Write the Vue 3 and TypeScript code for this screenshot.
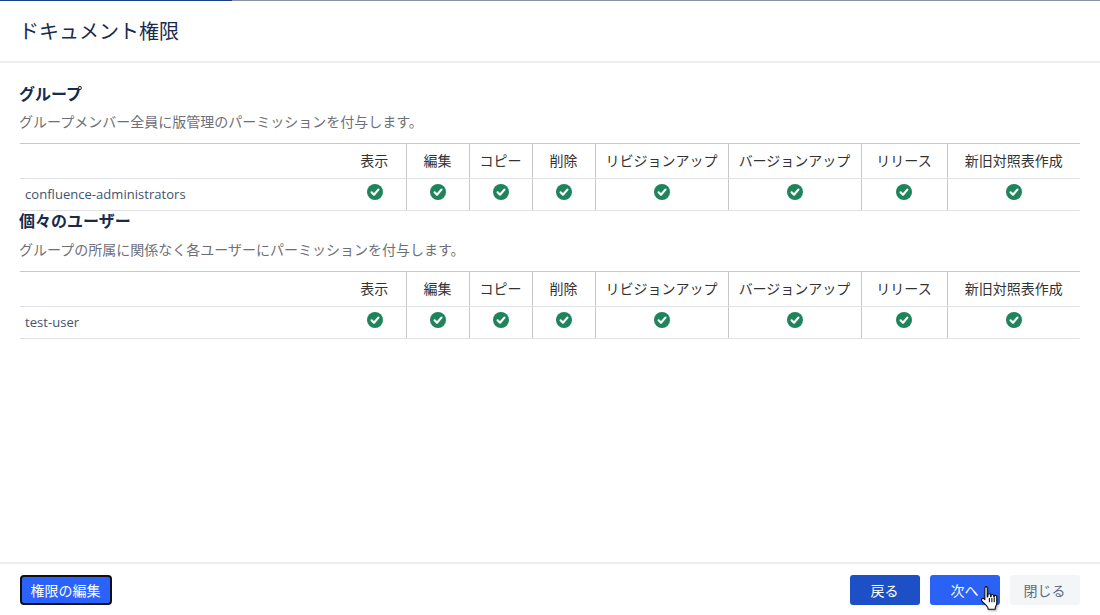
<script setup lang="ts">
const perms: string[] = ['表示', '編集', 'コピー', '削除', 'リビジョンアップ', 'バージョンアップ', 'リリース', '新旧対照表作成']
const widths: number[] = [63, 63, 63, 63, 133, 133, 86, 133]
const sections = [
  { title: 'グループ', desc: 'グループメンバー全員に版管理のパーミッションを付与します。', name: 'confluence-administrators' },
  { title: '個々のユーザー', desc: 'グループの所属に関係なく各ユーザーにパーミッションを付与します。', name: 'test-user' },
]
</script>

<template>
  <div class="dialog">
    <div class="progress"><div class="progress-fill"></div></div>
    <header class="head">
      <h1>ドキュメント権限</h1>
    </header>
    <main class="body">
      <section v-for="s in sections" :key="s.name" class="section">
        <h2>{{ s.title }}</h2>
        <p>{{ s.desc }}</p>
        <table>
          <colgroup>
            <col />
            <col v-for="(w, i) in widths" :key="i" :style="{ width: w + 'px' }" />
          </colgroup>
          <thead>
            <tr>
              <th></th>
              <th v-for="p in perms" :key="p">{{ p }}</th>
            </tr>
          </thead>
          <tbody>
            <tr>
              <td class="name">{{ s.name }}</td>
              <td v-for="p in perms" :key="p" class="check">
                <svg width="16" height="16" viewBox="0 0 16 16">
                  <circle cx="8" cy="8" r="8" fill="#1f845a" />
                  <path d="M4.600 8.300 7 10.700 11.400 5.600" fill="none" stroke="#fff" stroke-width="2.200" stroke-linecap="round" stroke-linejoin="round" />
                </svg>
              </td>
            </tr>
          </tbody>
        </table>
      </section>
    </main>
    <footer class="foot">
      <button class="btn edit">権限の編集</button>
      <div class="actions">
        <button class="btn back">戻る</button>
        <button class="btn next">次へ</button>
        <button class="btn close">閉じる</button>
      </div>
    </footer>
    <svg class="cursor" width="22" height="27" viewBox="0 0 20 25">
      <path d="M5 1.500c.9 0 1.500.7 1.500 1.600V11l.6-.1V9.300c0-.7.6-1.200 1.300-1.200s1.200.5 1.200 1.200v1.500l.5.1V9.900c0-.7.5-1.100 1.200-1.100s1.200.5 1.200 1.200v1.200l.5.2v-.7c0-.7.5-1.100 1.100-1.100.7 0 1.200.5 1.200 1.200v5.600c0 1.300-.3 2.300-.9 3.300-.3.6-.5 1.200-.5 2v.8H7.300v-.8c0-.8-.6-1.700-1.500-2.600L1.800 15.100c-.7-.7-.8-1.600-.2-2.200.6-.6 1.500-.6 2.200 0l-.1.100.6.500V3.100c0-.9.700-1.600 1.700-1.600Z" fill="#fff" stroke="#111" stroke-width="1" stroke-linejoin="round" />
      <path d="M8.500 12v4M10.800 12v4M13 12v4" stroke="#111" stroke-width="1" fill="none" />
    </svg>
  </div>
</template>

<style scoped>
.dialog {
  position: relative;
  width: 1100px;
  height: 615px;
  background: #fff;
  display: flex;
  flex-direction: column;
  overflow: hidden;
  font-family: "Open Sans", "Noto Sans CJK JP", sans-serif;
  color: #172b4d;
}
.progress {
  height: 1px;
  background: #8993a4;
  flex: none;
}
.progress-fill {
  width: 232px;
  height: 1px;
  background: #1a3e8c;
}
.head {
  height: 60px;
  flex: none;
  border-bottom: 2px solid #ebecf0;
  padding: 0 19px;
  display: flex;
  align-items: center;
}
h1 {
  margin: 0;
  font-size: 20px;
  font-weight: 400;
  line-height: 60px;
  color: #172b4d;
  font-family: "Noto Sans CJK JP", sans-serif;
}
.body {
  flex: 1;
  padding: 18px 20px 0;
}
h2 {
  margin: 0 0 0 -1px;
  font-size: 16px;
  font-weight: 700;
  line-height: 24px;
  color: #172b4d;
  font-family: "Noto Sans CJK JP", sans-serif;
}
p {
  margin: 6px 0 12px -1px;
  font-size: 14px;
  line-height: 20px;
  color: #6e7078;
  font-family: "Noto Sans CJK JP", sans-serif;
}
table {
  width: 1060px;
  table-layout: fixed;
  border-collapse: collapse;
  font-size: 14px;
}
th {
  height: 32px;
  padding: 0 0 2px;
  font-weight: 400;
  font-size: 14px;
  color: #333;
  text-align: center;
  border-top: 1px solid #c8c8cc;
  border-bottom: 1px solid #dfe1e6;
  border-right: 1px solid #c8c8cc;
  font-family: "Noto Sans CJK JP", sans-serif;
}
th:first-child,
th:last-child {
  border-right: none;
}
td {
  height: 31px;
  padding: 0;
  border-bottom: 1px solid #dfe1e6;
  border-right: 1px solid #c8c8cc;
}
td:first-child,
td:last-child {
  border-right: none;
}
.name {
  padding: 0 0 2px 5px;
  font-size: 13px;
  letter-spacing: 0.04px;
  color: #42526e;
  height: 29px;
}
.check {
  text-align: center;
  vertical-align: top;
  padding-top: 5px;
  height: 26px;
}
.check svg {
  display: block;
  margin: 0 auto;
}
.check:nth-child(2) svg {
  transform: translateX(1px);
}
.section + .section {
  margin-top: -3px;
}
.section + .section p {
  margin-top: 7px;
}
.foot {
  height: 51px;
  flex: none;
  border-top: 2px solid #ebecf0;
  padding: 0 20px;
  display: flex;
  align-items: center;
  justify-content: space-between;
}
.actions {
  display: flex;
  gap: 10px;
}
.btn {
  height: 30px;
  border: none;
  border-radius: 3px;
  font-size: 14px;
  font-family: "Noto Sans CJK JP", sans-serif;
  padding: 0 1px 0 0;
  width: 70px;
  line-height: 30px;
}
.edit {
  width: 92px;
  background: #2962ff;
  color: #fff;
  border: 2px solid #111;
  border-radius: 4px;
  line-height: 26px;
}
.back {
  background: #1d4fc7;
  color: #fff;
}
.next {
  background: #2962f5;
  color: #fff;
}
.close {
  background: #f4f5f7;
  color: #5e6c84;
}
.cursor {
  position: absolute;
  left: 980px;
  top: 585px;
  filter: drop-shadow(1px 1px 1px rgba(0, 0, 0, 0.35));
}
</style>
